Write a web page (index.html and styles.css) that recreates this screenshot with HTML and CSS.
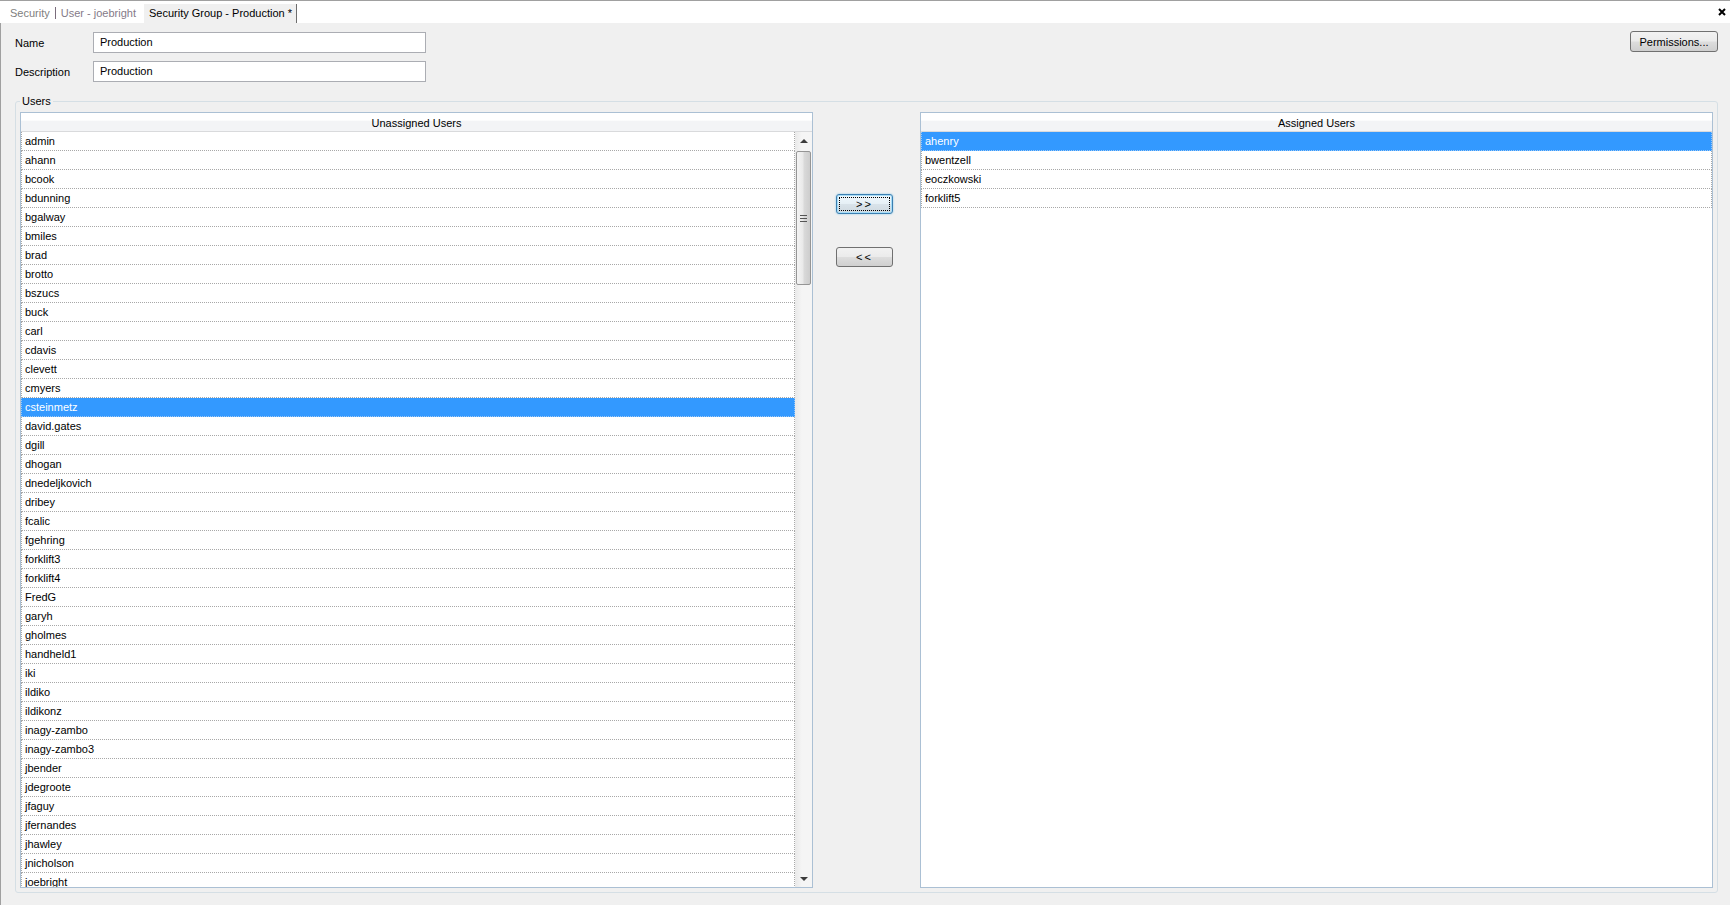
FILE: index.html
```html
<!DOCTYPE html>
<html>
<head>
<meta charset="utf-8">
<title>Security Group - Production</title>
<link rel="stylesheet" href="styles.css">
</head>
<body>
<div class="app">
  <div class="tabstrip">
    <span class="tab tab-inactive">Security</span>
    <span class="tab-sep"></span>
    <span class="tab tab-inactive tab-user">User - joebright</span>
    <span class="tab tab-active">Security Group - Production *</span>
    <span class="close">
      <svg width="8" height="8" viewBox="0 0 8 8"><path d="M1 1 L7 7 M7 1 L1 7" stroke="#000" stroke-width="2" fill="none"/></svg>
    </span>
  </div>
  <div class="main">
    <div class="form">
      <div class="fields">
        <div class="field"><label class="field-label">Name</label><div class="textbox">Production</div></div>
        <div class="field"><label class="field-label">Description</label><div class="textbox">Production</div></div>
      </div>
      <button class="btn btn-perm">Permissions...</button>
    </div>
    <div class="group">
      <span class="legend">Users</span>
      <div class="list list-left">
        <div class="list-header">Unassigned Users</div>
        <div class="list-body">
          <div class="rows">
            <div class="row">admin</div>
            <div class="row">ahann</div>
            <div class="row">bcook</div>
            <div class="row">bdunning</div>
            <div class="row">bgalway</div>
            <div class="row">bmiles</div>
            <div class="row">brad</div>
            <div class="row">brotto</div>
            <div class="row">bszucs</div>
            <div class="row">buck</div>
            <div class="row">carl</div>
            <div class="row">cdavis</div>
            <div class="row">clevett</div>
            <div class="row">cmyers</div>
            <div class="row selected">csteinmetz</div>
            <div class="row">david.gates</div>
            <div class="row">dgill</div>
            <div class="row">dhogan</div>
            <div class="row">dnedeljkovich</div>
            <div class="row">dribey</div>
            <div class="row">fcalic</div>
            <div class="row">fgehring</div>
            <div class="row">forklift3</div>
            <div class="row">forklift4</div>
            <div class="row">FredG</div>
            <div class="row">garyh</div>
            <div class="row">gholmes</div>
            <div class="row">handheld1</div>
            <div class="row">iki</div>
            <div class="row">ildiko</div>
            <div class="row">ildikonz</div>
            <div class="row">inagy-zambo</div>
            <div class="row">inagy-zambo3</div>
            <div class="row">jbender</div>
            <div class="row">jdegroote</div>
            <div class="row">jfaguy</div>
            <div class="row">jfernandes</div>
            <div class="row">jhawley</div>
            <div class="row">jnicholson</div>
            <div class="row">joebright</div>
          </div>
          <div class="scrollbar">
            <div class="sb-arrow"><span class="tri-up"></span></div>
            <div class="sb-thumb"><span class="grip"></span></div>
            <div class="sb-arrow sb-down"><span class="tri-down"></span></div>
          </div>
        </div>
      </div>
      <div class="mover">
        <button class="btn btn-move btn-default"><span class="focus-rect">&gt;&gt;</span></button>
        <button class="btn btn-move">&lt;&lt;</button>
      </div>
      <div class="list list-right">
        <div class="list-header">Assigned Users</div>
        <div class="list-body">
          <div class="rows">
            <div class="row selected">ahenry</div>
            <div class="row">bwentzell</div>
            <div class="row">eoczkowski</div>
            <div class="row">forklift5</div>
          </div>
        </div>
      </div>
    </div>
  </div>
</div>
</body>
</html>
```
FILE: styles.css
```css
* { box-sizing: border-box; }
html, body { margin: 0; height: 100%; }
body {
  background: #f0f0f0;
  font: 11px "Liberation Sans", Arial, sans-serif;
  color: #000;
  overflow: hidden;
}
.app { height: 905px; display: flex; flex-direction: column; }

/* tab strip */
.tabstrip {
  flex: none;
  height: 23px;
  border-top: 1px solid #a0a0a0;
  background: #fff;
  display: flex;
  align-items: flex-end;
  padding-left: 10px;
}
.tab {
  height: 19px;
  padding-bottom: 2px;
  display: flex;
  align-items: center;
  white-space: nowrap;
}
.tab-inactive { color: #808080; }
.tab-user { color: #857a88; }
.tab-sep {
  width: 1px;
  height: 12px;
  margin: 0 5px 4px 5px;
  background: #7a6c7c;
}
.tab-active {
  margin-left: 8px;
  padding: 0 4px 2px 5px;
  background: #f0f0f0;
  border-right: 1px solid #6e6e6e;
  color: #000;
}
.close {
  margin-left: auto;
  margin-right: 4px;
  align-self: center;
  display: flex;
  height: 8px;
}

/* main */
.main {
  flex: 1;
  min-height: 0;
  border-left: 1px solid #a0a0a0;
  padding: 9px 12px 12px 14px;
  display: flex;
  flex-direction: column;
}
.form { display: flex; justify-content: space-between; align-items: flex-start; flex: none; }
.fields { display: flex; flex-direction: column; gap: 8px; }
.field { display: flex; align-items: center; }
.field-label { width: 78px; }
.textbox {
  width: 333px;
  height: 21px;
  border: 1px solid #abadb3;
  background: #fff;
  padding: 0 6px;
  line-height: 19px;
}

.btn {
  font: 11px "Liberation Sans", Arial, sans-serif;
  color: #000;
  border: 1px solid #707070;
  border-radius: 3px;
  background: linear-gradient(#f2f2f2 0%, #ebebeb 48%, #dddddd 52%, #cfcfcf 100%);
  padding: 0;
  display: flex;
  align-items: center;
  justify-content: center;
}
.btn-perm { width: 88px; height: 21px; margin-top: -1px; }

/* group box */
.group {
  flex: 1;
  min-height: 0;
  margin-top: 19px;
  border: 1px solid #d5dfe5;
  border-radius: 3px;
  position: relative;
  padding: 10px 4px 4px 4px;
  display: flex;
}
.legend {
  position: absolute;
  top: -7px;
  left: 4px;
  padding: 0 2px;
  line-height: 13px;
  background: #f0f0f0;
}

.list {
  border: 1px solid #abc0d4;
  background: #fff;
  display: flex;
  flex-direction: column;
  min-height: 0;
}
.list-left { width: 793px; flex: none; }
.list-right { flex: 1; }
.list-header {
  flex: none;
  height: 19px;
  padding-top: 2px;
  line-height: 16px;
  text-align: center;
  border-bottom: 1px solid #d9dadc;
  background: linear-gradient(#ffffff 0%, #ffffff 40%, #f3f4f6 45%, #f3f4f6 100%);
}
.list-body { flex: 1; min-height: 0; display: flex; overflow: hidden; }
.rows { flex: 1; min-width: 0; }
.row {
  height: 19px;
  line-height: 18px;
  padding-left: 3px;
  border: 1px dotted #a8a8a8;
  border-top: none;
  white-space: nowrap;
}
.row.selected { background: #3399ff; color: #fff; border-color: #9cc8f5; }

/* scrollbar */
.scrollbar {
  flex: none;
  width: 17px;
  display: flex;
  flex-direction: column;
  align-items: center;
  background: linear-gradient(to right, #e9e9e9, #f5f5f5 40%, #f5f5f5);
}
.sb-arrow {
  height: 17px;
  width: 17px;
  flex: none;
  display: flex;
  align-items: center;
  justify-content: center;
}
.sb-down { margin-top: auto; }
.tri-up, .tri-down {
  width: 0; height: 0;
  border-left: 4px solid transparent;
  border-right: 4px solid transparent;
}
.tri-up { border-bottom: 4px solid #3c3c3c; }
.tri-down { border-top: 4px solid #3c3c3c; }
.sb-thumb {
  flex: none;
  margin-top: 2px;
  width: 15px;
  height: 134px;
  border: 1px solid #959595;
  border-radius: 2px;
  background: linear-gradient(to right, #f4f4f4 0%, #e9e9e9 45%, #d9d9d9 55%, #cdcdcd 100%);
  display: flex;
  align-items: center;
  justify-content: center;
}
.grip {
  width: 7px;
  height: 7px;
  background: repeating-linear-gradient(#555 0, #555 1px, transparent 1px, transparent 3px);
}

/* mover buttons */
.mover {
  flex: none;
  width: 107px;
  padding: 82px 0 0 23px;
  display: flex;
  flex-direction: column;
  gap: 33px;
}
.btn-move { width: 57px; height: 20px; letter-spacing: 2px; }
.btn-default {
  border-color: #3c7fb1;
  box-shadow: 0 0 0 1px #a6dcf7 inset, 0 0 2px #7ec4ea;
  background: linear-gradient(#f0f8fd 0%, #e6f0f6 48%, #d9e3ea 52%, #cfd9e0 100%);
  padding: 2px;
}
.focus-rect {
  flex: 1;
  align-self: stretch;
  display: flex;
  align-items: center;
  justify-content: center;
  outline: 1px dotted #000;
  outline-offset: -1px;
}
```
